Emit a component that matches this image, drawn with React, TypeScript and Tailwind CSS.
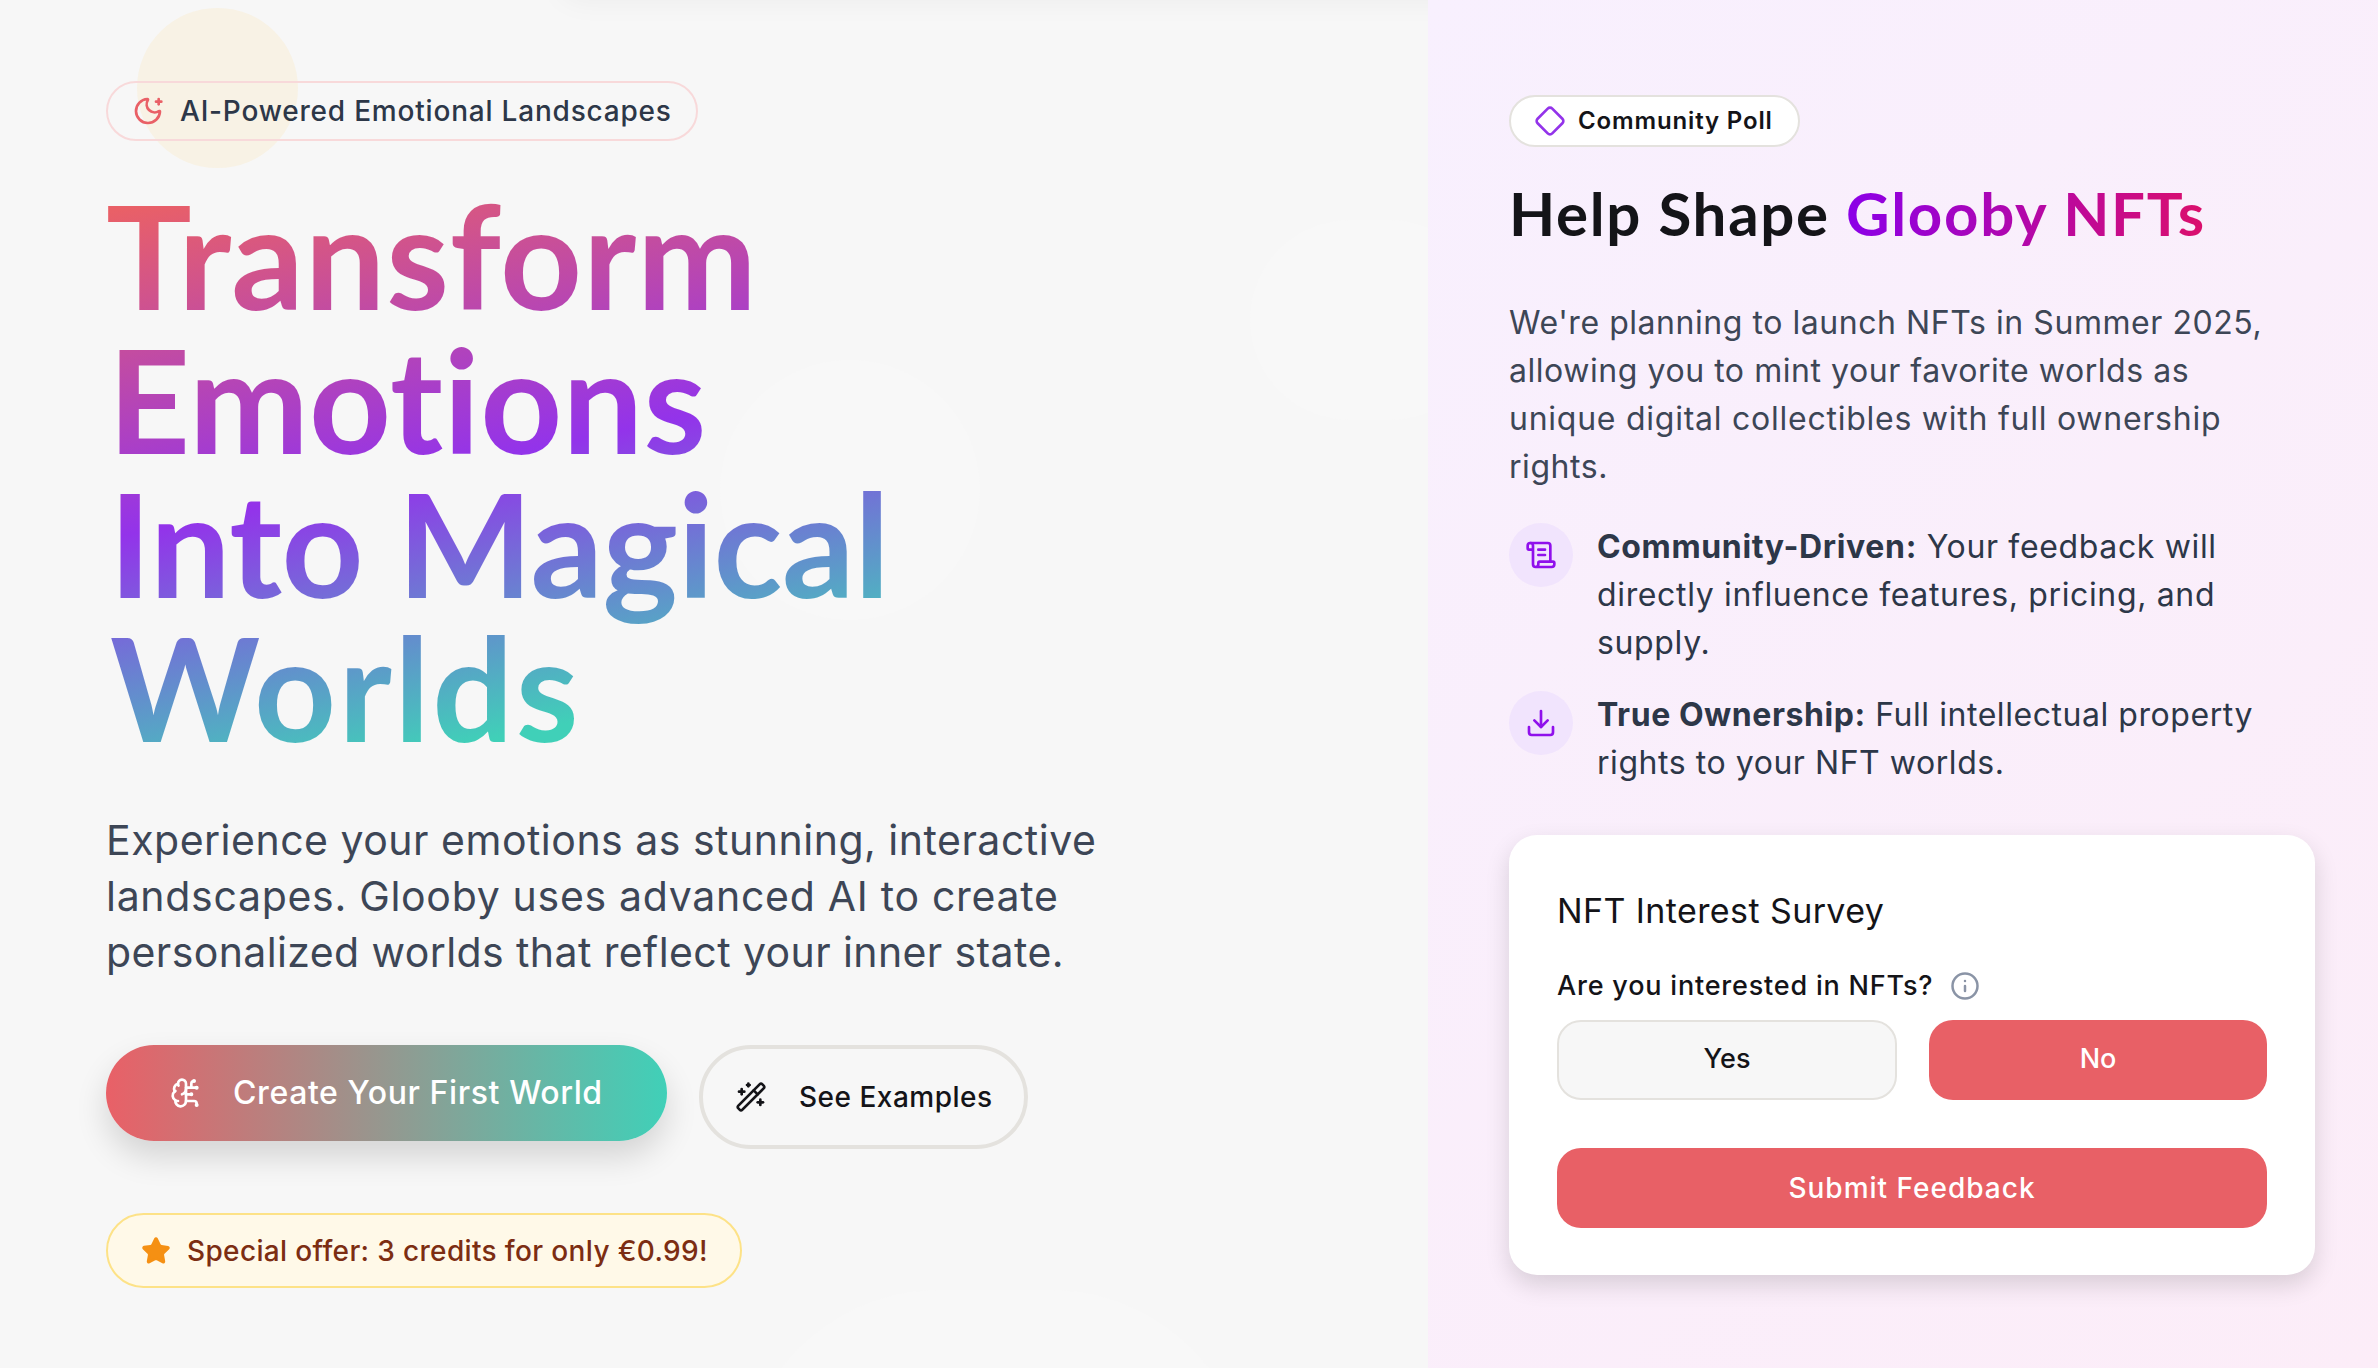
import { BrainCircuit, Diamond, Download, Info, MoonStar, ScrollText, Star, WandSparkles } from "lucide-react";

const poppins = "font-['Inter','Noto_Sans',sans-serif]";
const nunito = "font-['Lato','Noto_Sans',sans-serif]";

export default function App() {
  return (
    <div className={`flex h-[1368px] w-[2378px] overflow-hidden bg-[#f7f7f7] ${poppins}`}>
      <section className="relative flex w-[1428px] shrink-0 flex-col items-start overflow-hidden pl-[106px] pt-[81px]">
        <div className="absolute left-[137px] top-[8px] h-[160px] w-[161px] rounded-full bg-[#f8f2e5]" />
        <div className="absolute left-[740px] top-[1290px] h-[400px] w-[510px] rounded-full bg-[#f8f8f8]" />
        <div className="absolute left-[720px] top-[360px] h-[260px] w-[260px] rounded-full bg-[#f8f8f8]" />
        <div className="absolute left-[1250px] top-[220px] h-[200px] w-[240px] rounded-full bg-[#f8f8f8]" />
        <div className="absolute left-[560px] top-[-40px] h-[40px] w-[1240px] rounded-full shadow-[0_0_30px_rgba(0,0,0,0.05)]" />
        <div className="relative flex h-[60px] w-[592px] items-center gap-[16px] rounded-full border-2 border-[#f8d9da] pl-[24px]">
          <MoonStar className="h-[32px] w-[32px] text-[#e96067]" strokeWidth={2} />
          <span className="text-[28px] font-medium tracking-[0.8px] text-[#2d3748]">AI-Powered Emotional Landscapes</span>
        </div>
        <h1 className={`relative mt-[42px] w-fit bg-[linear-gradient(168deg,#e96067_4%,#9333ea_48%,#40d0b8_86%)] bg-clip-text text-[143px] font-bold leading-[144px] text-transparent [font-variant-ligatures:none] ${nunito}`}>
          <span className="block tracking-[0.8px]">Transform</span>
          <span className="ml-[2px] block tracking-[0.3px]">Emotions</span>
          <span className="ml-[3px] block tracking-[-0.4px]">Into Magical</span>
          <span className="ml-[4px] block tracking-[2.4px]">Worlds</span>
        </h1>
        <p className="relative mt-[53px] w-[1040px] text-[41px] leading-[56px] tracking-[0.5px] text-[#3d4656]">
          <span className="block">Experience your emotions as stunning, interactive</span>
          <span className="block tracking-[0.7px]">landscapes. Glooby uses advanced AI to create</span>
          <span className="block tracking-[0.4px]">personalized worlds that reflect your inner state.</span>
        </p>
        <div className="relative mt-[65px] flex items-start gap-[32px]">
          <button className="flex h-[96px] w-[561px] items-center gap-[31px] rounded-full bg-[linear-gradient(90deg,#e96067,#40d0b8)] pl-[64px] text-[32px] font-medium tracking-[0.6px] text-white shadow-[0_16px_32px_rgba(0,0,0,0.14)]">
            <BrainCircuit className="h-[32px] w-[32px]" />
            <span>Create Your First World</span>
          </button>
          <button className="flex h-[104px] w-[329px] items-center gap-[32px] rounded-full border-[4px] border-[#e4e2de] pl-[32px] text-[28px] font-medium tracking-[0.5px] text-[#141418]">
            <WandSparkles className="h-[32px] w-[32px]" />
            <span>See Examples</span>
          </button>
        </div>
        <div className="relative mt-[64px] flex h-[75px] w-[636px] items-center gap-[16px] rounded-full border-2 border-[#fde287] bg-[#fff9e8] pl-[33px] text-[28px] font-medium tracking-[0.35px] text-[#7c2d12]">
          <Star className="h-[30px] w-[30px] fill-[#f59013] text-[#f59013]" />
          <span>Special offer: 3 credits for only €0.99!</span>
        </div>
      </section>

      <section className="flex min-w-0 flex-1 flex-col items-start bg-[linear-gradient(135deg,#f8f0fe,#fcedf8)] pl-[81px] pr-[63px] pt-[95px]">
        <div className="flex h-[52px] w-[291px] items-center gap-[12px] rounded-full border-2 border-[#e4e2de] bg-white pl-[23px] text-[24px] font-semibold tracking-[0.85px] text-[#141418]">
          <Diamond className="h-[32px] w-[32px] text-[#9333ea]" strokeWidth={2} />
          <span>Community Poll</span>
        </div>
        <h2 className={`mt-[30px] text-[60px] font-bold leading-[72px] tracking-[1.7px] text-[#141418] ${nunito}`}>
          Help Shape <span className="bg-[linear-gradient(90deg,#8b00e8,#db0f6b)] bg-clip-text text-transparent">Glooby NFTs</span>
        </h2>
        <p className="mt-[50px] text-[32px] leading-[48px] tracking-[0.55px] text-[#3d4656]">
          <span className="block">We're planning to launch NFTs in Summer 2025,</span>
          <span className="block">allowing you to mint your favorite worlds as</span>
          <span className="block tracking-[0.75px]">unique digital collectibles with full ownership</span>
          <span className="block">rights.</span>
        </p>
        <div className="mt-[32px] flex gap-[24px]">
          <div className="flex h-[64px] w-[64px] shrink-0 items-center justify-center rounded-full bg-[#f1e4fd]">
            <ScrollText className="h-[32px] w-[32px] text-[#9010ec]" />
          </div>
          <p className="text-[32px] leading-[48px] tracking-[0.65px] text-[#2d3748]">
            <strong className="font-bold">Community-Driven:</strong> Your feedback will<br />directly influence features, pricing, and<br />supply.
          </p>
        </div>
        <div className="mt-[24px] flex gap-[24px]">
          <div className="flex h-[64px] w-[64px] shrink-0 items-center justify-center rounded-full bg-[#f1e4fd]">
            <Download className="h-[32px] w-[32px] text-[#9010ec]" />
          </div>
          <p className="text-[32px] leading-[48px] tracking-[0.55px] text-[#2d3748]">
            <strong className="font-bold">True Ownership:</strong> Full intellectual property<br />rights to your NFT worlds.
          </p>
        </div>
        <div className="mt-[48px] w-[806px] rounded-[28px] bg-white px-[48px] pb-[47px] pt-[52px] shadow-[0_10px_24px_rgba(0,0,0,0.14)]">
          <h3 className="text-[34px] font-normal leading-[48px] tracking-[0.4px] text-[#141418]">NFT Interest Survey</h3>
          <div className="mt-[31px] flex items-center gap-[17px] text-[27px] font-medium tracking-[0.8px] text-[#141418]">
            <span>Are you interested in NFTs?</span>
            <Info className="h-[30px] w-[30px] text-[#8a94a6]" />
          </div>
          <div className="mt-[13px] flex gap-[32px]">
            <button className="h-[80px] w-[341px] rounded-[24px] border-2 border-[#e4e2de] bg-[#f7f7f7] text-[27px] font-medium text-[#141418]">Yes</button>
            <button className="h-[80px] w-[339px] rounded-[24px] bg-[#e86066] text-[27px] font-medium text-white">No</button>
          </div>
          <button className="mt-[48px] h-[80px] w-full rounded-[24px] bg-[#e86066] text-[28px] font-medium tracking-[1px] text-white">Submit Feedback</button>
        </div>
      </section>
    </div>
  );
}
